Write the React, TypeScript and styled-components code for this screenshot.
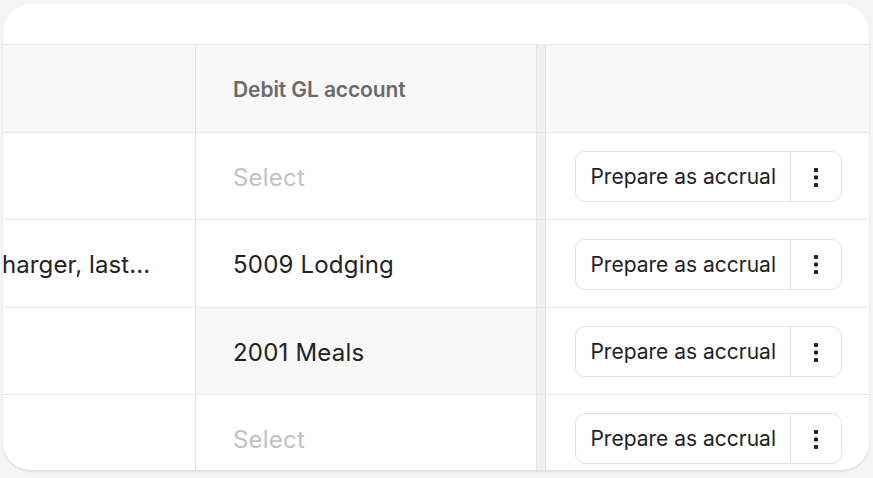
import React from "react";
import styled, { createGlobalStyle } from "styled-components";

const Global = createGlobalStyle`
  html, body { margin: 0; padding: 0; background: #f5f5f5; }
  body { font-family: Inter, "Noto Sans", "Liberation Sans", sans-serif; -webkit-font-smoothing: antialiased; }
  * { box-sizing: border-box; }
`;

const Page = styled.div`
  width: 873px;
  height: 478px;
  padding: 4px 4px 0 3px;
  background: #f5f5f5;
  overflow: hidden;
`;

const Card = styled.div`
  width: 866px;
  height: 466px;
  background: #ffffff;
  border-radius: 28px;
  overflow: hidden;
  box-shadow: 0 2px 2px rgba(0, 0, 0, 0.09);
  display: flex;
  flex-direction: column;
`;

const TopBand = styled.div`
  height: 41px;
  flex: none;
  border-bottom: 1px solid #e8e8e8;
`;

const Grid = styled.div`
  display: grid;
  grid-template-columns: 193px 341px 9px 1fr;
  grid-template-rows: 88px 87px 88px 87px 87px;
  flex: none;
`;

const Cell = styled.div<{ $head?: boolean; $hover?: boolean }>`
  display: flex;
  align-items: center;
  border-right: 1px solid #e6e6e6;
  border-bottom: 1px solid #e8e8e8;
  background: ${(p) => (p.$head || p.$hover ? "#f8f8f8" : "#ffffff")};
  min-width: 0;
  overflow: hidden;
`;

const DescCell = styled(Cell)`
  padding-left: 0;
`;

const GlCell = styled(Cell)`
  padding-left: 37px;
`;

const Resizer = styled.div`
  background: #f0f0f0;
  border-right: 1px solid #e3e3e3;
  border-bottom: 1px solid #e6e6e6;
`;

const ActionCell = styled(Cell)`
  border-right: none;
  justify-content: flex-end;
  padding-right: 27px;
  padding-top: 1px;
`;

const HeadText = styled.span`
  font-size: 21px;
  font-weight: 600;
  color: #6a6a6a;
  letter-spacing: -0.1px;
  margin-top: 1px;
`;

const DescText = styled.span`
  font-size: 24px;
  color: #222222;
  white-space: nowrap;
  margin-left: -1px;
  margin-top: 2px;
  letter-spacing: 0.1px;
`;

const GlText = styled.span<{ $placeholder?: boolean }>`
  font-size: 24px;
  color: ${(p) => (p.$placeholder ? "#c2c2c2" : "#222222")};
  white-space: nowrap;
  margin-top: 2px;
  letter-spacing: 0.2px;
`;

const SplitButton = styled.div`
  display: flex;
  height: 51px;
  border: 1px solid #e2e2e2;
  border-radius: 10px;
  background: #ffffff;
  overflow: hidden;
`;

const MainButton = styled.button`
  all: unset;
  display: flex;
  align-items: center;
  padding: 0 14px 0 14px;
  font-family: Inter, "Noto Sans", "Liberation Sans", sans-serif;
  font-size: 21px;
  color: #1f1f1f;
  border-right: 1px solid #e2e2e2;
  white-space: nowrap;
`;

const MenuButton = styled.button`
  all: unset;
  width: 50px;
  display: flex;
  align-items: center;
  justify-content: center;
  color: #1f1f1f;
`;

const Dots = () => (
  <svg width="6" height="22" viewBox="0 0 6 22" aria-hidden>
    <rect x="1" y="2" width="4" height="4" rx="1" fill="currentColor" />
    <rect x="1" y="9.5" width="4" height="4" rx="1" fill="currentColor" />
    <rect x="1" y="17" width="4" height="4" rx="1" fill="currentColor" />
  </svg>
);

type Row = { desc: string; gl: string | null; hover?: boolean };

const rows: Row[] = [
  { desc: "", gl: null },
  { desc: "harger, last...", gl: "5009 Lodging" },
  { desc: "", gl: "2001 Meals", hover: true },
  { desc: "", gl: null },
];

export default function App() {
  return (
    <>
      <Global />
      <Page>
        <Card>
          <TopBand />
          <Grid>
            <DescCell $head />
            <GlCell $head>
              <HeadText>Debit GL account</HeadText>
            </GlCell>
            <Resizer />
            <ActionCell $head />
            {rows.map((r, i) => (
              <React.Fragment key={i}>
                <DescCell>{r.desc && <DescText>{r.desc}</DescText>}</DescCell>
                <GlCell $hover={r.hover}>
                  <GlText $placeholder={!r.gl}>{r.gl ?? "Select"}</GlText>
                </GlCell>
                <Resizer />
                <ActionCell>
                  <SplitButton>
                    <MainButton>Prepare as accrual</MainButton>
                    <MenuButton aria-label="More">
                      <Dots />
                    </MenuButton>
                  </SplitButton>
                </ActionCell>
              </React.Fragment>
            ))}
          </Grid>
        </Card>
      </Page>
    </>
  );
}
